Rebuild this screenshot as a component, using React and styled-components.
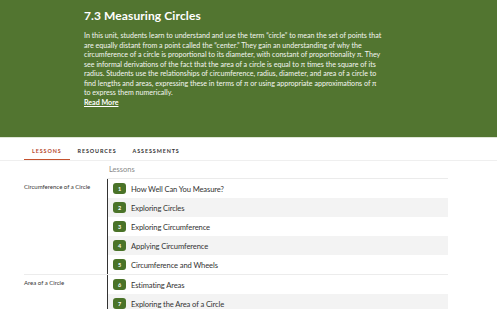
import React from "react";
import styled, { createGlobalStyle } from "styled-components";

const Global = createGlobalStyle`
  html, body { margin: 0; padding: 0; background: #fff; }
  body { font-family: Lato, "Open Sans", sans-serif; -webkit-font-smoothing: antialiased; }
  * { box-sizing: border-box; }
`;

const Page = styled.div`
  width: 497px;
  height: 309px;
  overflow: hidden;
  background: #fff;
`;

const Hero = styled.header`
  height: 138px;
  background: #527530;
  border-bottom: 1px solid #dfe6d6;
  padding: 9px 0 0 84px;
  color: #fff;
`;

const Title = styled.h1`
  margin: 0;
  font-family: Lato, sans-serif;
  font-weight: 700;
  font-size: 12px;
  line-height: 14px;
  letter-spacing: 0.1px;
`;

const Summary = styled.p`
  margin: 8px 0 0;
  font-size: 7.1px;
  line-height: 9.5px;
  color: #f4f6f0;
`;

const Line = styled.span`
  display: block;
  white-space: nowrap;
`;

const ReadMore = styled.a`
  display: block;
  color: #fff;
  font-weight: 700;
  text-decoration: underline;
`;

const Tabs = styled.nav`
  display: flex;
  height: 23px;
  padding-left: 24px;
  border-bottom: 1px solid #efefef;
`;

const Tab = styled.div`
  display: flex;
  align-items: center;
  padding: 4px 8px 0;
  font-size: 5.4px;
  font-weight: 700;
  letter-spacing: 0.9px;
  color: ${(p) => (p.$active ? "#b5472b" : "#333")};
  border-bottom: 1.5px solid ${(p) => (p.$active ? "#c4522f" : "transparent")};
`;

const Board = styled.div`
  width: 448px;
  padding-left: 24px;
`;

const Grid = styled.div`
  display: grid;
  grid-template-columns: 83px 1fr;
  border-top: ${(p) => (p.$divided ? "1px solid #ececec" : "none")};
`;

const HeadCell = styled.div`
  height: 18px;
  display: flex;
  align-items: center;
  padding-left: 2px;
  font-size: 7.5px;
  color: #8a8a8a;
  border-bottom: 1.5px solid #ebebeb;
`;

const SectionLabel = styled.div`
  font-size: 6px;
  color: #333;
  padding-top: 4px;
`;

const List = styled.div`
  border-left: 1.5px solid #333;
`;

const Row = styled.div`
  display: flex;
  align-items: center;
  gap: 5px;
  height: 19px;
  padding-left: 5px;
  background: ${(p) => (p.$shade ? "#f3f3f3" : "#fff")};
`;

const Badge = styled.span`
  width: 13px;
  height: 11px;
  border-radius: 3px;
  background: #4a7328;
  color: #fff;
  font-size: 5.5px;
  font-weight: 700;
  display: flex;
  align-items: center;
  justify-content: center;
`;

const LessonName = styled.span`
  font-size: 7.6px;
  letter-spacing: -0.12px;
  color: #333;
`;

const sections = [
  {
    label: "Circumference of a Circle",
    lessons: [
      "How Well Can You Measure?",
      "Exploring Circles",
      "Exploring Circumference",
      "Applying Circumference",
      "Circumference and Wheels",
    ],
  },
  {
    label: "Area of a Circle",
    lessons: ["Estimating Areas", "Exploring the Area of a Circle"],
  },
];

export default function App() {
  let n = 0;
  return (
    <Page>
      <Global />
      <Hero>
        <Title>7.3 Measuring Circles</Title>
        <Summary>
          <Line>In this unit, students learn to understand and use the term “circle” to mean the set of points that</Line>
          <Line>are equally distant from a point called the “center.” They gain an understanding of why the</Line>
          <Line>circumference of a circle is proportional to its diameter, with constant of proportionality π. They</Line>
          <Line>see informal derivations of the fact that the area of a circle is equal to π times the square of its</Line>
          <Line>radius. Students use the relationships of circumference, radius, diameter, and area of a circle to</Line>
          <Line>find lengths and areas, expressing these in terms of π or using appropriate approximations of π</Line>
          <Line>to express them numerically.</Line>
          <ReadMore href="#">Read More</ReadMore>
        </Summary>
      </Hero>
      <Tabs>
        <Tab $active>LESSONS</Tab>
        <Tab>RESOURCES</Tab>
        <Tab>ASSESSMENTS</Tab>
      </Tabs>
      <Board>
        <Grid>
          <div />
          <HeadCell>Lessons</HeadCell>
        </Grid>
        {sections.map((s, si) => (
          <Grid key={s.label} $divided={si > 0}>
            <SectionLabel>{s.label}</SectionLabel>
            <List>
              {s.lessons.map((l, i) => {
                n += 1;
                return (
                  <Row key={l} $shade={i % 2 === 1}>
                    <Badge>{n}</Badge>
                    <LessonName>{l}</LessonName>
                  </Row>
                );
              })}
            </List>
          </Grid>
        ))}
      </Board>
    </Page>
  );
}
